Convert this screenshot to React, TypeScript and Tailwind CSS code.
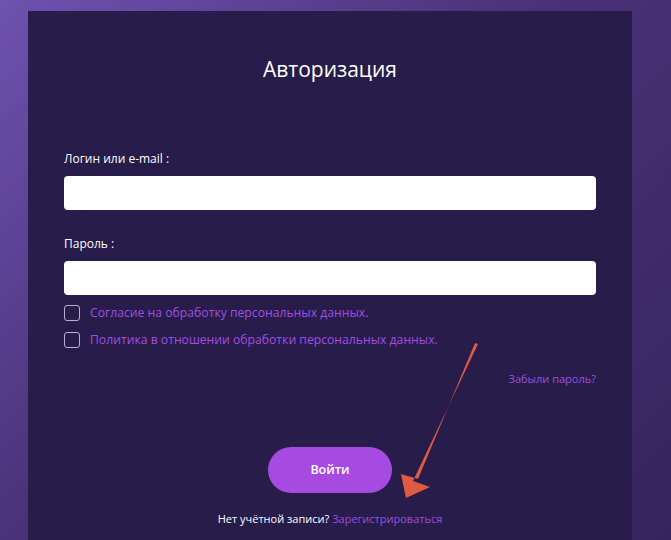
import React from "react";

export default function App() {
  return (
    <div
      className="relative w-[671px] h-[540px] overflow-hidden bg-[linear-gradient(135deg,#6e52b0_0%,#4a3278_45%,#35245e_100%)]"
      style={{ fontFamily: '"Open Sans", "Noto Sans", sans-serif' }}
    >
      <div className="ml-[28px] mt-[11px] w-[604px] h-[560px] bg-[#271c4a] px-[36px] pt-[44px]">
        <h1 className="text-center text-white text-[21px] leading-[28px]">Авторизация</h1>

        <div className="mt-[67px] text-white text-[12px] font-medium leading-[18px]">Логин или e-mail :</div>
        <div className="mt-[8px] h-[34px] rounded-[4px] bg-white" />

        <div className="mt-[25px] text-white text-[12px] font-medium leading-[18px]">Пароль :</div>
        <div className="mt-[8px] h-[34px] rounded-[4px] bg-white" />

        <div className="mt-[10px] flex flex-col gap-[11px]">
          <div className="flex items-center gap-[10px]">
            <div className="w-[16px] h-[16px] rounded-[3px] border border-[#b7b0c8]" />
            <span className="text-[#a24fe0] text-[12.2px] leading-[16px]">Согласие на обработку персональных данных.</span>
          </div>
          <div className="flex items-center gap-[10px]">
            <div className="w-[16px] h-[16px] rounded-[3px] border border-[#b7b0c8]" />
            <span className="text-[#a24fe0] text-[12.2px] leading-[16px]">Политика в отношении обработки персональных данных.</span>
          </div>
        </div>

        <div className="mt-[23px] text-right text-[#9b4fe0] text-[11px] leading-[16px]">Забыли пароль?</div>

        <div className="mt-[60px] flex justify-center">
          <button className="w-[124px] h-[46px] rounded-full bg-[#a64ae2] text-white text-[12.5px] font-semibold">
            Войти
          </button>
        </div>

        <div className="mt-[18px] text-center text-[11px] leading-[16px] text-white">
          Нет учётной записи? <span className="text-[#9b4fe0]">Зарегистрироваться</span>
        </div>
      </div>

      <svg className="absolute left-0 top-0" width="671" height="540" viewBox="0 0 671 540">
        <polygon points="478,344 475,343 418,479 401,474 406,498 430,487 413,481" fill="#de5a43" />
      </svg>
    </div>
  );
}
